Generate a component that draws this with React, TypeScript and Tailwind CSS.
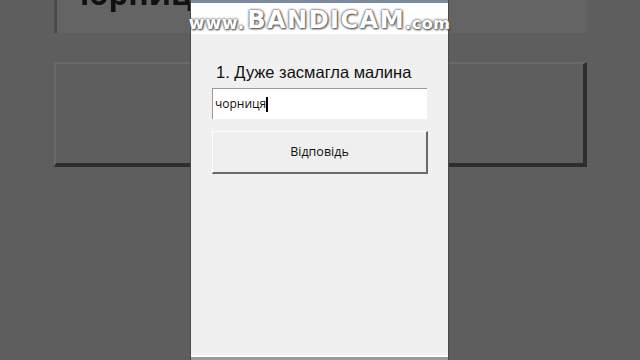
import React from "react";

export default function App() {
  return (
    <div className="relative w-[640px] h-[360px] overflow-hidden bg-[#5e5e5e] font-['Liberation_Sans',sans-serif]">
      {/* blurred, enlarged backdrop */}
      <div className="flex flex-col pl-[54px] pr-[53px]">
        <div className="relative h-[33px] bg-[#646464] border-l-[3px] border-[#4a4a4a] blur-[0.6px] overflow-hidden">
          <div className="absolute left-[12px] top-[-22px] text-[31px] font-bold text-[#111] leading-none font-['Open_Sans',sans-serif]">
            чорниця
          </div>
        </div>
        <div className="mt-[29px] h-[105px] border-t-2 border-l-2 border-[#6a6a6a] border-r-[4px] border-b-[4px] border-r-[#2e2e2e] border-b-[#2e2e2e] blur-[0.5px]" />
      </div>

      {/* center window */}
      <div className="absolute left-[190px] top-0 w-[259px] h-[360px] flex flex-col border-l border-r border-[#4a4a4a]">
        <div className="h-[3px] bg-[#7a8aa0]" />
        <div className="h-[31px] bg-white flex items-center justify-center">
          <div className="flex items-end pt-[2px] text-white font-['DejaVu_Sans',sans-serif] font-bold [text-shadow:0_0_2px_#555,0_0_3px_#777,1px_1px_2px_#444]">
            <span className="text-[17px] leading-none tracking-[1px]">www.</span>
            <span className="text-[24px] leading-none tracking-[1.5px] ml-[2px]">BANDICAM</span>
            <span className="text-[16px] leading-none tracking-[0.5px]">.com</span>
          </div>
        </div>
        <div className="flex-1 bg-[#f0f0f0] flex flex-col px-[21px] pt-[27px]">
          <div className="pl-[4px] text-[16.5px] leading-[22px] text-[#111]">1. Дуже засмагла малина</div>
          <div className="mt-[5px] w-[215px] h-[31px] bg-white border-t border-l border-[#9a9a9a] flex items-center pl-[2px]">
            <span className="text-[12px] text-[#111] font-['Open_Sans',sans-serif]">чорниця</span>
            <span className="w-[2px] h-[15px] bg-black" />
          </div>
          <div className="mt-[12px] w-[216px] h-[43px] bg-[#efefef] border-t border-l border-white border-r-2 border-b-2 border-r-[#6a6a6a] border-b-[#6a6a6a] flex items-center justify-center">
            <span className="text-[12.5px] text-[#111] font-['Open_Sans',sans-serif]">Відповідь</span>
          </div>
          <div className="flex-1" />
        </div>
        <div className="h-[2px] bg-white" />
        <div className="h-[3px] bg-[#9a9a9a]" />
      </div>
    </div>
  );
}
